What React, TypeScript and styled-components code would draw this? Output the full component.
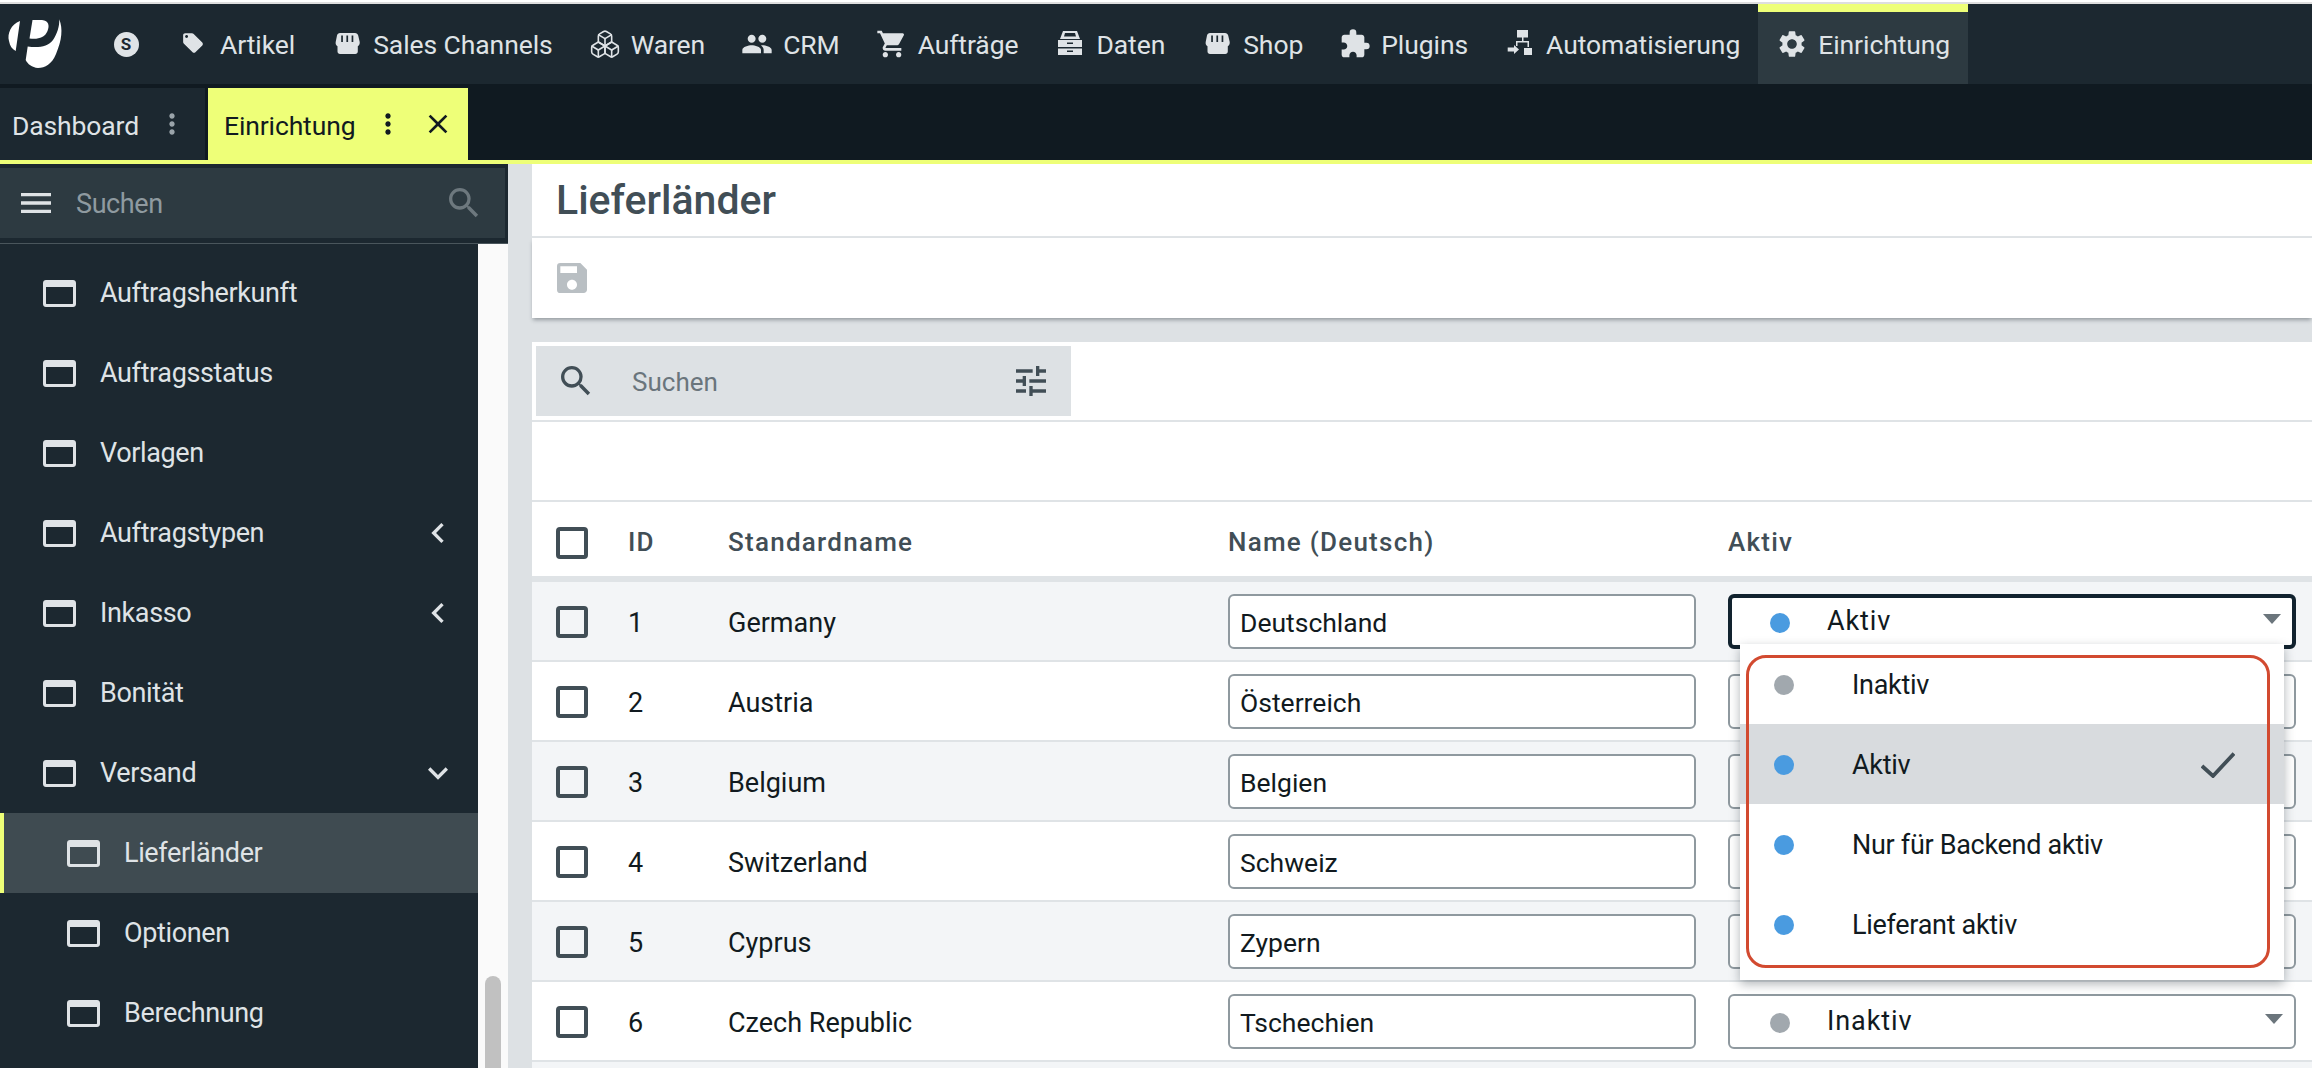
import React from "react";
import styled, { createGlobalStyle } from "styled-components";
import {
  MdLocalOffer, MdPeople, MdShoppingCart, MdExtension, MdSettings, MdMoreVert, MdClose,
  MdMenu, MdSearch, MdSave, MdTune, MdChevronLeft, MdExpandMore,
} from "react-icons/md";
import { Boxes } from "lucide-react";

const FONT = `Roboto, "Noto Sans", sans-serif`;

const Global = createGlobalStyle`
  html, body { margin: 0; padding: 0; width: 2312px; height: 1068px; overflow: hidden; background: #fff; }
  * { box-sizing: border-box; }
  body { font-family: ${FONT}; font-size: 28px; color: #111a20; }
`;

const Page = styled.div`
  width: 2312px;
  height: 1068px;
  display: flex;
  flex-direction: column;
  overflow: hidden;
`;
const TopEdge = styled.div`
  height: 4px;
  flex: none;
  background: #fff;
  border-top: 2px solid #fff;
  border-bottom: 2px solid #dedede;
`;
const NavBar = styled.nav`
  height: 80px;
  flex: none;
  display: flex;
  background: #1c2830;
  color: #dfe3e6;
`;
const LogoBox = styled.div`
  width: 92px;
  flex: none;
  display: flex;
  align-items: flex-start;
`;
const NavItem = styled.div<{ $active?: boolean }>`
  display: flex;
  align-items: center;
  gap: 10px;
  padding: 0 18px;
  background: ${(p) => (p.$active ? "#2d3a41" : "transparent")};
  box-shadow: ${(p) => (p.$active ? "inset 0 8px 0 #eeff78" : "none")};
  white-space: nowrap;
  font-size: 26.5px;
  letter-spacing: -0.08px;
  svg { display: block; flex: none; }
`;
const Coin = styled.span`
  width: 25px;
  height: 25px;
  margin: 0 3.5px;
  border-radius: 50%;
  background: #dfe3e6;
  color: #1c2830;
  font-size: 17px;
  font-weight: 700;
  letter-spacing: 0;
  display: flex;
  align-items: center;
  justify-content: center;
`;
const TabBar = styled.div`
  height: 76px;
  flex: none;
  display: flex;
  gap: 3px;
  padding-top: 4px;
  background: #101a21;
`;
const Tab = styled.div<{ $active?: boolean }>`
  display: flex;
  align-items: center;
  padding: ${(p) => (p.$active ? "0 14px 0 16px" : "0 17px 0 12px")};
  background: ${(p) => (p.$active ? "#eeff78" : "#1c2830")};
  color: ${(p) => (p.$active ? "#111a20" : "#dfe3e6")};
  font-size: 26.5px;
  letter-spacing: -0.13px;
  svg { display: block; flex: none; }
`;
const TabLabel = styled.span`
  position: relative;
  top: 1px;
`;
const TabDots = styled(MdMoreVert)<{ $active?: boolean }>`
  margin-left: 17px;
  color: ${(p) => (p.$active ? "#111a20" : "#9aa4aa")};
`;
const TabClose = styled(MdClose)`
  margin-left: 18px;
`;
const YellowLine = styled.div`
  height: 4px;
  flex: none;
  background: #eeff78;
`;
const Body = styled.div`
  flex: 1;
  min-height: 0;
  display: flex;
  background: #dde1e4;
`;
const Sidebar = styled.aside`
  width: 508px;
  flex: none;
  display: flex;
  flex-direction: column;
`;
const SideSearch = styled.div`
  height: 79px;
  flex: none;
  display: flex;
  align-items: center;
  background: #2d3a41;
  border-top: 4px solid #1c2830;
  border-right: 3px solid #1c2830;
  border-bottom: 5px solid #1c2830;
  padding: 0 21px 0 16px;
  color: #dfe3e6;
  svg { display: block; flex: none; }
`;
const SidePlaceholder = styled.span`
  flex: 1;
  margin-left: 20px;
  padding-top: 2px;
  color: #8f9aa0;
  font-size: 27px;
  letter-spacing: -0.4px;
`;
const SideRule = styled.div`
  height: 1px;
  flex: none;
  background: #4a565c;
`;
const SideColumns = styled.div`
  flex: 1;
  min-height: 0;
  display: flex;
`;
const SideList = styled.div`
  width: 478px;
  flex: none;
  padding-top: 9px;
  background: #1c2830;
  overflow: hidden;
`;
const SideItem = styled.div<{ $sub?: boolean; $selected?: boolean }>`
  height: 80px;
  display: flex;
  align-items: center;
  padding: 0 20px 0 ${(p) => (p.$sub ? "67px" : "43px")};
  gap: 24px;
  color: #dfe3e6;
  background: ${(p) => (p.$selected ? "#3f4b51" : "transparent")};
  box-shadow: ${(p) => (p.$selected ? "inset 4px 0 0 #eeff78" : "none")};
  font-size: 27px;
  letter-spacing: -0.37px;
  svg { display: block; flex: none; }
`;
const SideLabel = styled.span`
  flex: 1;
`;
const ScrollTrack = styled.div`
  width: 30px;
  flex: none;
  background: #fafafa;
  display: flex;
  justify-content: center;
`;
const ScrollThumb = styled.div`
  width: 16px;
  height: 200px;
  margin-top: 732px;
  border-radius: 8px;
  background: #c1c1c1;
`;
const Main = styled.main`
  flex: 1;
  min-width: 0;
  margin-left: 24px;
  display: flex;
  flex-direction: column;
`;
const TitlePanel = styled.div`
  height: 74px;
  flex: none;
  padding-left: 24px;
  display: flex;
  align-items: center;
  background: #fff;
  border-bottom: 2px solid #dfe3e6;
`;
const Title = styled.h1`
  margin: 0;
  font-size: 41px;
  font-weight: 500;
  color: #414e56;
`;
const Toolbar = styled.div`
  height: 80px;
  flex: none;
  padding-left: 20px;
  display: flex;
  align-items: center;
  background: #fff;
  box-shadow: 0 3px 4px -1px rgba(40, 50, 58, 0.4);
  color: #b9bfc3;
  margin-bottom: 24px;
`;
const TablePanel = styled.section`
  flex: 1;
  min-height: 0;
  background: #fff;
  display: flex;
  flex-direction: column;
`;
const SearchRow = styled.div`
  height: 80px;
  flex: none;
  padding: 4px;
  border-bottom: 2px solid #dfe3e6;
`;
const SearchBox = styled.div`
  width: 535px;
  height: 70px;
  display: flex;
  align-items: center;
  padding: 0 20px 0 20px;
  background: #dde1e4;
  color: #414e56;
  svg { display: block; flex: none; }
`;
const SearchPlaceholder = styled.span`
  flex: 1;
  margin-left: 36px;
  padding-top: 2px;
  color: #6a757c;
  font-size: 26px;
`;
const EmptyRow = styled.div`
  height: 80px;
  flex: none;
  border-bottom: 2px solid #dfe3e6;
`;
const HeaderRow = styled.div`
  height: 80px;
  flex: none;
  display: grid;
  grid-template-columns: 72px 100px 500px 500px 568px;
  align-items: center;
  padding: 6px 16px 0 24px;
  border-bottom: 6px solid #dfe3e6;
  color: #414e56;
  font-size: 26px;
  font-weight: 500;
  letter-spacing: 1.25px;
`;
const Row = styled.div<{ $zebra: boolean }>`
  height: 80px;
  flex: none;
  display: grid;
  grid-template-columns: 72px 100px 500px 500px 568px;
  align-items: center;
  padding: 0 16px 0 24px;
  border-bottom: 2px solid #dfe3e6;
  background: ${(p) => (p.$zebra ? "#f3f5f7" : "#fff")};
  font-size: 27px;
`;
const RowText = styled.span`
  padding-top: 3px;
`;
const Check = styled.span`
  width: 32px;
  height: 32px;
  margin-top: 1px;
  border: 4px solid #414e56;
  border-radius: 4px;
  display: block;
`;
const NameInput = styled.div`
  width: 468px;
  height: 55px;
  display: flex;
  align-items: center;
  padding: 3px 0 0 10px;
  background: #fff;
  border: 2px solid #8f999f;
  border-radius: 6px;
  font-size: 26.5px;
`;
const SelectCell = styled.div`
  position: relative;
`;
const SelectBox = styled.div<{ $focus?: boolean }>`
  height: 55px;
  display: flex;
  align-items: center;
  background: #fff;
  border: ${(p) => (p.$focus ? "4px solid #12232f" : "2px solid #8f999f")};
  border-radius: 6px;
  padding: 3px 11px 0 ${(p) => (p.$focus ? "38px" : "40px")};
  font-size: 27px;
`;
const Dot = styled.span<{ $active: boolean }>`
  width: 20px;
  height: 20px;
  flex: none;
  border-radius: 50%;
  background: ${(p) => (p.$active ? "#4a9be0" : "#a1a8ae")};
`;
const SelectText = styled.span`
  flex: 1;
  margin-left: 37px;
  letter-spacing: 0.9px;
  position: relative;
  top: -2px;
`;
const Caret = styled.span`
  width: 0;
  height: 0;
  position: relative;
  top: -4px;
  border-left: 9.5px solid transparent;
  border-right: 9.5px solid transparent;
  border-top: 10px solid #6b757c;
`;
const Dropdown = styled.div`
  position: absolute;
  left: 12px;
  top: 50px;
  width: 544px;
  height: 336px;
  background: #fff;
  box-shadow: 0 4px 10px rgba(30, 40, 48, 0.35);
  z-index: 5;
`;
const Option = styled.div<{ $selected?: boolean }>`
  height: 80px;
  display: flex;
  align-items: center;
  padding: 3px 49px 0 34px;
  background: ${(p) => (p.$selected ? "#d8dbde" : "transparent")};
  font-size: 27px;
  letter-spacing: -0.3px;
  svg { display: block; flex: none; }
`;
const OptionText = styled.span`
  flex: 1;
  margin-left: 58px;
`;
const Annotation = styled.div`
  position: absolute;
  left: 6px;
  top: 11px;
  width: 524px;
  height: 313px;
  border: 3px solid #d24a30;
  border-radius: 20px;
  pointer-events: none;
`;

const WindowIcon = () => (
  <svg width="33" height="27" viewBox="0 0 33 27" fill="#dfe3e6">
    <path fillRule="evenodd" d="M3 0h27c1.7 0 3 1.3 3 3v21c0 1.700-1.300 3-3 3H3c-1.700 0-3-1.300-3-3V3c0-1.700 1.300-3 3-3zm0 7v16.500c0 .300.200.500.500.500h26c.300 0 .500-.200.500-.500V7z" />
  </svg>
);
const StoreIcon = () => (
  <svg width="32" height="32" viewBox="0 0 32 32" fill="#dfe3e6">
    <path d="M9 5h15c1.600 0 2.800 1 3.200 2.500l1.500 6.500c.300 1.800-.500 3.300-1.900 4.200v5.300c0 1.400-1.100 2.500-2.500 2.500H9c-1.400 0-2.500-1.100-2.500-2.500v-5.300C5.100 17.300 4.300 15.800 4.700 14l1.300-6.500C6.300 6 7.500 5 9 5z" />
    <g fill="#1c2830">
      <rect x="10.200" y="7.500" width="1.700" height="6.500" />
      <rect x="15.400" y="7.500" width="1.700" height="6.500" />
      <rect x="20.600" y="7.500" width="1.700" height="6.500" />
    </g>
  </svg>
);
const DrawerIcon = () => (
  <svg width="32" height="32" viewBox="0 0 32 32" fill="#dfe3e6">
    <path fillRule="evenodd" d="M9 3h14l3 8H6zm2 2-1 3.500h12L21 5z" />
    <path fillRule="evenodd" d="M4 12h24v7H4zm9 2.500v1.500h6v-1.500z" />
    <path fillRule="evenodd" d="M4 20.500h24V27H4zm9 2v1.500h6v-1.500z" />
  </svg>
);
const FlowIcon = () => (
  <svg width="32" height="32" viewBox="0 0 32 32" fill="#dfe3e6">
    <rect x="13" y="2" width="11" height="7.500" />
    <rect x="18" y="9" width="1.500" height="5" />
    <rect x="12" y="13" width="13" height="1.500" />
    <rect x="12" y="13" width="1.500" height="5" />
    <rect x="23.500" y="13" width="1.500" height="6" />
    <rect x="20" y="20" width="8" height="7" />
    <path d="M3.700 19.500H10V17l5 4.500-5 4.500v-2.500H3.700z" />
  </svg>
);
const ThinCheck = () => (
  <svg width="34" height="26" viewBox="0 0 34 26" fill="none" stroke="#414e56" strokeWidth="3.800">
    <path d="M1 14l11 10L33 1.500" />
  </svg>
);
const Logo = () => (
  <svg width="92" height="80" viewBox="0 0 92 80" fill="#fff">
    <path d="M20 17 C11 20 7 30 9 37 C10 42 12 45 15.700 47 Z" />
    <path d="M32.500 16 L42 16 C49 16.500 49.500 22 47.500 27 C44.500 34 38 35.500 29.500 34.500 Z" />
    <path d="M59.300 15.300 C63 25 62 36 56 50 C52 60 45 64 38 64 C32 63.500 27.500 60 25.700 56 L27.700 42.500 C38 44 48 43 53 36 C57 30 59.500 23 59.300 15.300 Z" />
  </svg>
);

const TagIcon = styled(MdLocalOffer)`
  transform: translate(-1px, -1px) scale(0.74);
`;

const navItems: [React.ReactNode, string][] = [
  [<TagIcon size={32} />, "Artikel"],
  [<StoreIcon />, "Sales Channels"],
  [<Boxes size={32} strokeWidth={1.2} />, "Waren"],
  [<MdPeople size={32} />, "CRM"],
  [<MdShoppingCart size={32} />, "Aufträge"],
  [<DrawerIcon />, "Daten"],
  [<StoreIcon />, "Shop"],
  [<MdExtension size={32} />, "Plugins"],
  [<FlowIcon />, "Automatisierung"],
];

const sideItems: { label: string; arrow?: "left" | "down"; sub?: boolean; selected?: boolean }[] = [
  { label: "Auftragsherkunft" },
  { label: "Auftragsstatus" },
  { label: "Vorlagen" },
  { label: "Auftragstypen", arrow: "left" },
  { label: "Inkasso", arrow: "left" },
  { label: "Bonität" },
  { label: "Versand", arrow: "down" },
  { label: "Lieferländer", sub: true, selected: true },
  { label: "Optionen", sub: true },
  { label: "Berechnung", sub: true },
];

const rows: [string, string, string, string, boolean][] = [
  ["1", "Germany", "Deutschland", "Aktiv", true],
  ["2", "Austria", "Österreich", "", true],
  ["3", "Belgium", "Belgien", "", true],
  ["4", "Switzerland", "Schweiz", "", true],
  ["5", "Cyprus", "Zypern", "", true],
  ["6", "Czech Republic", "Tschechien", "Inaktiv", false],
];

const options: [string, boolean, boolean][] = [
  ["Inaktiv", false, false],
  ["Aktiv", true, true],
  ["Nur für Backend aktiv", true, false],
  ["Lieferant aktiv", true, false],
];

export default function App() {
  return (
    <Page>
      <Global />
      <TopEdge />
      <NavBar>
        <LogoBox><Logo /></LogoBox>
        <NavItem><Coin>S</Coin></NavItem>
        {navItems.map(([icon, label]) => (
          <NavItem key={label}>{icon}<span>{label}</span></NavItem>
        ))}
        <NavItem $active><MdSettings size={32} /><span>Einrichtung</span></NavItem>
      </NavBar>
      <TabBar>
        <Tab><TabLabel>Dashboard</TabLabel><TabDots size={32} /></Tab>
        <Tab $active><TabLabel>Einrichtung</TabLabel><TabDots size={32} $active /><TabClose size={32} /></Tab>
      </TabBar>
      <YellowLine />
      <Body>
        <Sidebar>
          <SideSearch>
            <MdMenu size={40} />
            <SidePlaceholder>Suchen</SidePlaceholder>
            <MdSearch size={40} color="#6d787e" />
          </SideSearch>
          <SideRule />
          <SideColumns>
            <SideList>
              {sideItems.map((it) => (
                <SideItem key={it.label} $sub={it.sub} $selected={it.selected}>
                  <WindowIcon />
                  <SideLabel>{it.label}</SideLabel>
                  {it.arrow === "left" && <MdChevronLeft size={40} />}
                  {it.arrow === "down" && <MdExpandMore size={40} />}
                </SideItem>
              ))}
            </SideList>
            <ScrollTrack><ScrollThumb /></ScrollTrack>
          </SideColumns>
        </Sidebar>
        <Main>
          <TitlePanel><Title>Lieferländer</Title></TitlePanel>
          <Toolbar><MdSave size={40} /></Toolbar>
          <TablePanel>
            <SearchRow>
              <SearchBox>
                <MdSearch size={40} />
                <SearchPlaceholder>Suchen</SearchPlaceholder>
                <MdTune size={40} />
              </SearchBox>
            </SearchRow>
            <EmptyRow />
            <HeaderRow>
              <Check />
              <span>ID</span>
              <span>Standardname</span>
              <span>Name (Deutsch)</span>
              <span>Aktiv</span>
            </HeaderRow>
            {rows.map(([id, std, de, status, on], i) => (
              <Row key={id} $zebra={i % 2 === 0}>
                <Check />
                <RowText>{id}</RowText>
                <RowText>{std}</RowText>
                <NameInput>{de}</NameInput>
                <SelectCell>
                  <SelectBox $focus={i === 0}>
                    <Dot $active={on} />
                    <SelectText>{status}</SelectText>
                    <Caret />
                  </SelectBox>
                  {i === 0 && (
                    <Dropdown>
                      {options.map(([label, active, selected]) => (
                        <Option key={label} $selected={selected}>
                          <Dot $active={active} />
                          <OptionText>{label}</OptionText>
                          {selected && <ThinCheck />}
                        </Option>
                      ))}
                      <Annotation />
                    </Dropdown>
                  )}
                </SelectCell>
              </Row>
            ))}
            <Row $zebra />
          </TablePanel>
        </Main>
      </Body>
    </Page>
  );
}
